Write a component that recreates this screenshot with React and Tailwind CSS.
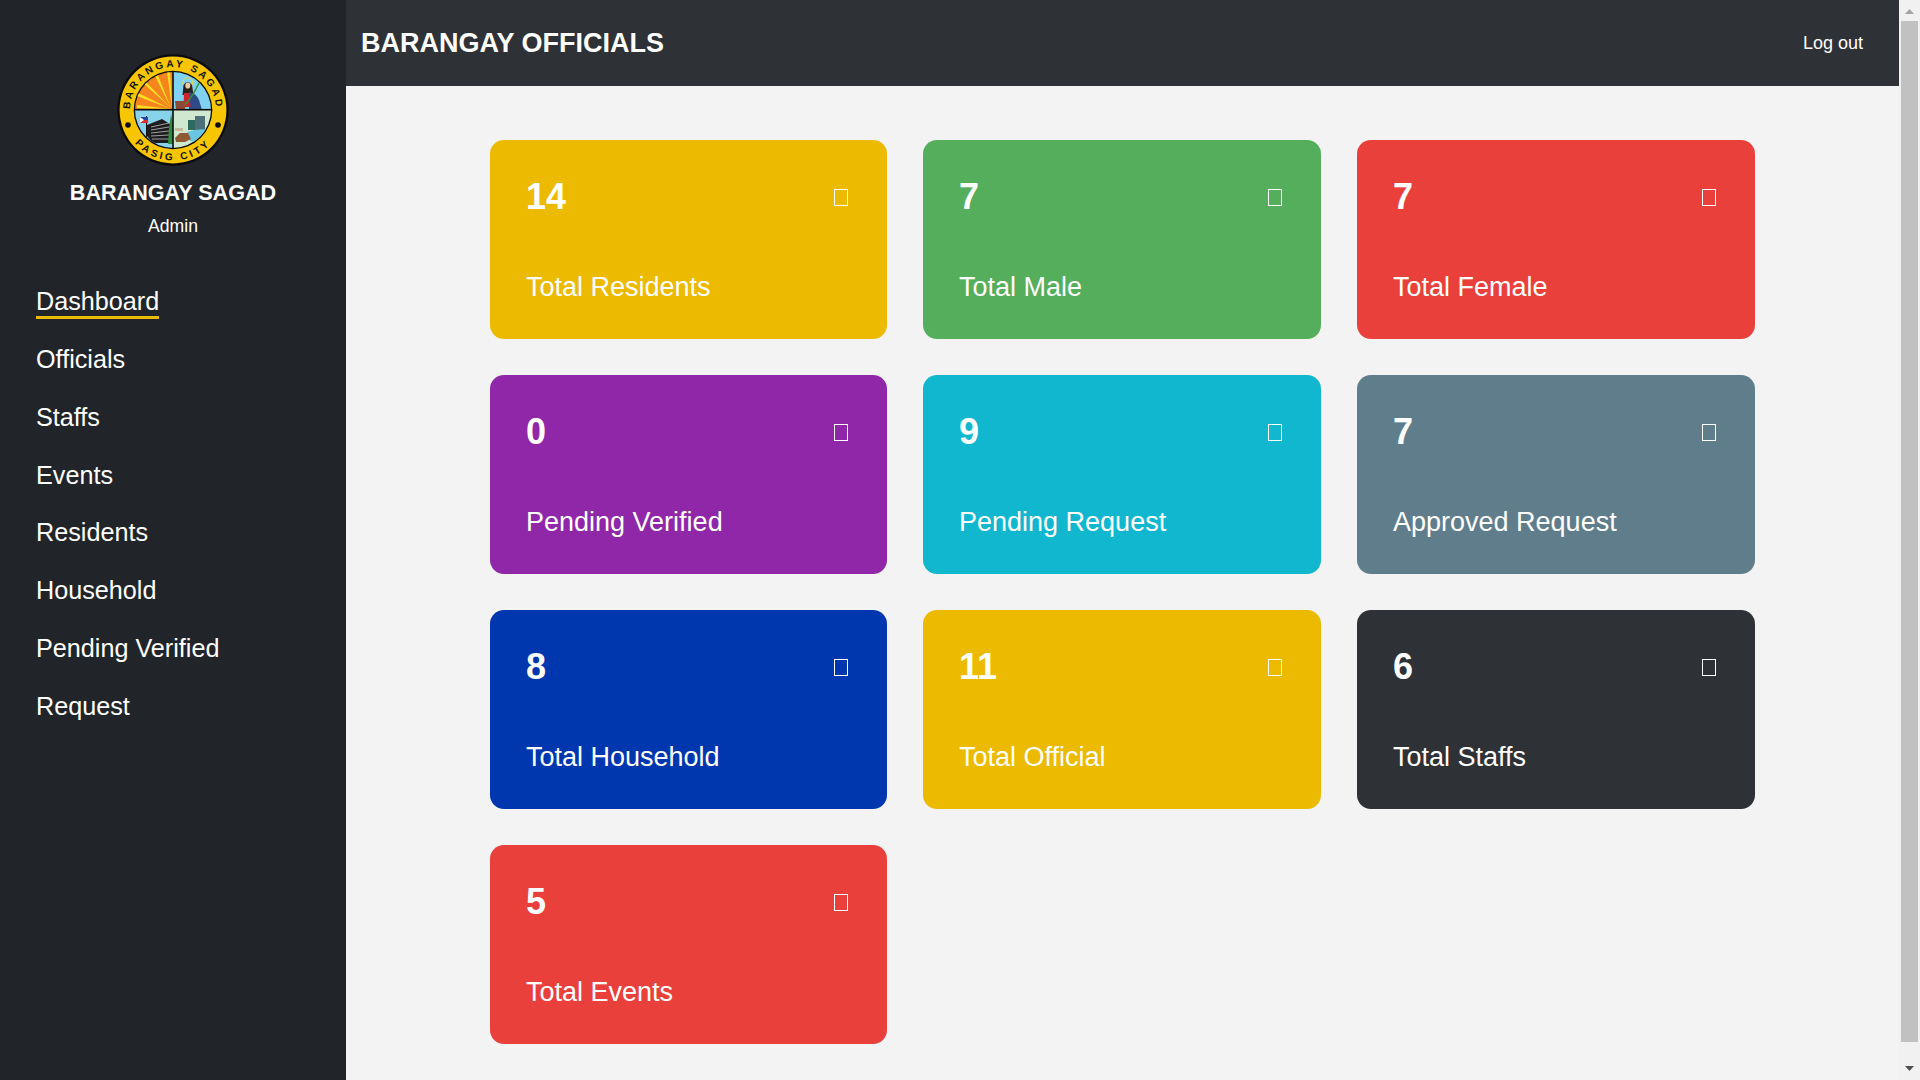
import React from "react";

const navItems = [
  "Dashboard",
  "Officials",
  "Staffs",
  "Events",
  "Residents",
  "Household",
  "Pending Verified",
  "Request",
];

const cards = [
  { value: 14, label: "Total Residents", color: "bg-[#ecba00]" },
  { value: 7, label: "Total Male", color: "bg-[#55ae5b]" },
  { value: 7, label: "Total Female", color: "bg-[#ea403b]" },
  { value: 0, label: "Pending Verified", color: "bg-[#8f27a8]" },
  { value: 9, label: "Pending Request", color: "bg-[#10b7cf]" },
  { value: 7, label: "Approved Request", color: "bg-[#607d8b]" },
  { value: 8, label: "Total Household", color: "bg-[#0037ae]" },
  { value: 11, label: "Total Official", color: "bg-[#ecba00]" },
  { value: 6, label: "Total Staffs", color: "bg-[#2e3136]" },
  { value: 5, label: "Total Events", color: "bg-[#ea403b]" },
];

function Logo() {
  return (
    <svg viewBox="0 0 112 112" className="w-[112px] h-[112px]">
      <defs>
        <clipPath id="inner">
          <circle cx="56" cy="56" r="38" />
        </clipPath>
        <path id="topArc" d="M 13 56 A 43 43 0 0 1 99 56" />
        <path id="bottomArc" d="M 5.5 56 A 50.5 50.5 0 0 0 106.5 56" />
      </defs>
      <circle cx="56" cy="56" r="55.7" fill="#0b0b0b" />
      <circle cx="56" cy="56" r="53.4" fill="#f7c600" />
      <circle cx="56" cy="56" r="39.3" fill="#0b0b0b" />
      <g clipPath="url(#inner)">
        {/* sun quadrant */}
        <rect x="18" y="18" width="38" height="38" fill="#f6851f" />
        <g fill="#fbe122">
          <polygon points="54,55 20,51 20,54" />
          <polygon points="54,55 21,39 20,42" />
          <polygon points="54,54 28,27 26,29" />
          <polygon points="54,54 40,19 37,20" />
          <polygon points="55,54 53,17 50,17" />
        </g>
        {/* saint quadrant */}
        <rect x="56" y="18" width="38" height="38" fill="#7fd2f1" />
        <circle cx="70.7" cy="28.7" r="5.4" fill="#e8d84a" />
        <circle cx="70.7" cy="28.7" r="4.4" fill="#7fd2f1" />
        <path d="M66.5 31 q4 -6 8.5 0 l1.5 10 h-11 z" fill="#2b211c" />
        <ellipse cx="70.8" cy="31.5" rx="2.5" ry="3.1" fill="#efc9a4" />
        <path d="M72 38 q7 1 10 8 l3 10 h-13 z" fill="#2f4a86" />
        <path d="M67 39 h5.5 l1 14 h-7 z" fill="#c9252b" />
        <path d="M58 47 h11 l-1 8.5 h-9 z" fill="#8a4a34" />
        <path d="M68 51 q8 -9 14 -22" stroke="#3c8f3c" strokeWidth="1.5" fill="none" />
        {/* city hall quadrant */}
        <rect x="18" y="56" width="38" height="38" fill="#88d3ec" />
        <rect x="29" y="62" width="1" height="24" fill="#111" />
        <polygon points="23,63 31,63 31,69 23,69" fill="#e02b2b" />
        <polygon points="23,63 31,63 31,66 23,66" fill="#2747a8" />
        <polygon points="23,63 27,66 23,69" fill="#fff" />
        <polygon points="30,71 45,65 53,70 53,89 36,89 30,82" fill="#1d1d1f" />
        <g stroke="#d8d8d8" strokeWidth="0.7">
          <path d="M34 73 L52 69" />
          <path d="M34 76 L52 73" />
          <path d="M34 79 L52 77" />
          <path d="M34 82 L52 81" />
          <path d="M35 85 L52 85" />
        </g>
        <polygon points="54,60 56,70 56,90 51,90 52,74" fill="#2f8d3f" />
        {/* skyline quadrant */}
        <rect x="56" y="56" width="38" height="38" fill="#cfe8cf" />
        <rect x="71" y="66" width="7" height="10" fill="#2d6b5f" />
        <rect x="78" y="62" width="10" height="15" fill="#4c6f7a" />
        <path d="M70 78 q12 -4 22 -2 l-6 10 q-10 4 -14 0 z" fill="#6ac6e0" />
        <path d="M58 84 l5 -5 h8 l3 6 l-6 3 h-9 z" fill="#8d5a34" />
        <rect x="58" y="74" width="8" height="3" fill="#c9b8a0" />
      </g>
      <rect x="17" y="54.9" width="78" height="1.6" fill="#0b0b0b" />
      <rect x="55.2" y="17" width="1.6" height="78" fill="#0b0b0b" />
      <circle cx="11" cy="71" r="2.8" fill="#0b0b0b" />
      <circle cx="101" cy="71" r="2.8" fill="#0b0b0b" />
      <text fontSize="10" fontWeight="700" fill="#111" letterSpacing="2.7" textAnchor="middle">
        <textPath href="#topArc" startOffset="50%">
          BARANGAY SAGAD
        </textPath>
      </text>
      <text fontSize="10" fontWeight="700" fill="#111" letterSpacing="3" textAnchor="middle">
        <textPath href="#bottomArc" startOffset="50%">
          PASIG CITY
        </textPath>
      </text>
    </svg>
  );
}

function Sidebar() {
  return (
    <aside className="w-[346px] shrink-0 bg-[#212529] text-white">
      <div className="flex flex-col items-center pt-[54px]">
        <Logo />
        <h1 className="mt-[14px] text-[21.6px] leading-[26px] font-bold">BARANGAY SAGAD</h1>
        <p className="mt-[7px] text-[17.6px] leading-[26px]">Admin</p>
      </div>
      <nav className="mt-[48px] pl-9 flex flex-col items-start">
        {navItems.map((item, i) => (
          <a key={item} className="h-[57.85px] text-[25.2px] leading-[29px]">
            <span className={i === 0 ? "block border-b-[3px] border-[#ecba00]" : "block"}>{item}</span>
          </a>
        ))}
      </nav>
    </aside>
  );
}

function StatCard({ value, label, color }) {
  return (
    <div className={`${color} h-[199px] rounded-[14px] pl-9 pr-[39px] pt-[37px] text-white`}>
      <div className="flex items-center justify-between">
        <span className="text-[36px] leading-[40px] font-bold">{value}</span>
        <span className="w-[14px] h-[17px] border border-white" />
      </div>
      <p className="mt-[54px] text-[27px] leading-[32px]">{label}</p>
    </div>
  );
}

function Scrollbar() {
  return (
    <div className="w-[21px] shrink-0 bg-[#f1f1f1] flex flex-col items-center">
      <div className="h-[21px] pt-[9px] flex justify-center">
        <svg viewBox="0 0 9 5" className="w-[9px] h-[5px]">
          <polygon points="4.5,0 9,5 0,5" fill="#a3a3a3" />
        </svg>
      </div>
      <div className="w-[17px] h-[1021px] bg-[#c1c1c1]" />
      <div className="flex-1 pb-[9px] flex items-end justify-center">
        <svg viewBox="0 0 9 5" className="w-[9px] h-[5px]">
          <polygon points="0,0 9,0 4.5,5" fill="#505050" />
        </svg>
      </div>
    </div>
  );
}

export default function App() {
  return (
    <div className="flex h-screen overflow-hidden bg-[#f3f3f3] font-['Liberation_Sans',Arial,sans-serif]">
      <Sidebar />
      <div className="flex-1 min-w-0 flex flex-col">
        <header className="h-[86px] shrink-0 bg-[#2e3136] text-white flex items-center justify-between pl-[15px] pr-9">
          <h2 className="text-[27px] font-bold">BARANGAY OFFICIALS</h2>
          <a className="text-[18px]">Log out</a>
        </header>
        <main className="flex-1 pt-[54px]">
          <div className="w-[1265px] mx-auto grid grid-cols-[397px_398px_398px] gap-9">
            {cards.map((card) => (
              <StatCard key={card.label} {...card} />
            ))}
          </div>
        </main>
      </div>
      <Scrollbar />
    </div>
  );
}
